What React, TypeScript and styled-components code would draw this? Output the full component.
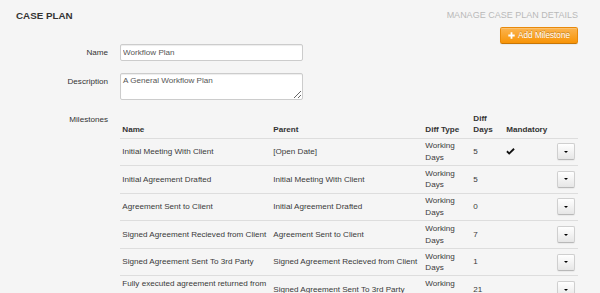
import React from "react";
import styled, { createGlobalStyle } from "styled-components";

const Global = createGlobalStyle`
  html, body { margin: 0; padding: 0; overflow: hidden; background: #f5f5f5; }
  body { font-family: "Liberation Sans", Arial, Helvetica, sans-serif; color: #333; }
`;

const Page = styled.div`
  padding: 10px 22px 0 16px;
  font-size: 8.1px;
  line-height: 11.6px;
`;

const Header = styled.div`
  display: flex;
  justify-content: space-between;
  align-items: flex-start;
  height: 12px;
`;

const Title = styled.h1`
  margin: 0;
  font-size: 9.8px;
  line-height: 12px;
  font-weight: bold;
  color: #333;
`;

const Subtitle = styled.div`
  margin-top: -1px;
  font-size: 9px;
  line-height: 12px;
  color: #b9b9b9;
`;

const ActionBar = styled.div`
  display: flex;
  justify-content: flex-end;
  margin-top: 5px;
`;

const WarningButton = styled.button`
  display: flex;
  align-items: center;
  gap: 3px;
  height: 17px;
  padding: 0 7px;
  font-family: inherit;
  font-size: 8.2px;
  line-height: 11px;
  color: #fff;
  text-shadow: 0 -1px 0 rgba(0, 0, 0, 0.25);
  background: linear-gradient(to bottom, #fbb450, #f89406);
  border: 1px solid #e8890a;
  border-bottom-color: #c77606;
  border-radius: 2.3px;
  box-shadow: inset 0 1px 0 rgba(255, 255, 255, 0.2), 0 1px 1px rgba(0, 0, 0, 0.05);
  cursor: pointer;
`;

const Form = styled.div`
  display: grid;
  grid-template-columns: 92px 1fr;
  column-gap: 12px;
  row-gap: 11.5px;
`;

const Label = styled.label`
  text-align: right;
  padding-top: 3.2px;
  color: #333;
`;

const TextInput = styled.input`
  box-sizing: border-box;
  width: 183px;
  height: 17px;
  padding: 0 2px;
  font-family: inherit;
  font-size: 8.1px;
  color: #555;
  background: #fff;
  border: 1px solid #ccc;
  border-radius: 2px;
  box-shadow: inset 0 1px 1px rgba(0, 0, 0, 0.075);
  outline: none;
`;

const TextArea = styled.textarea`
  box-sizing: border-box;
  display: block;
  width: 183px;
  height: 27px;
  padding: 1.5px 2px;
  font-family: inherit;
  font-size: 8.1px;
  line-height: 11.6px;
  color: #555;
  background: #fff;
  border: 1px solid #ccc;
  border-radius: 2px;
  box-shadow: inset 0 1px 1px rgba(0, 0, 0, 0.075);
  outline: none;
`;

const Table = styled.table`
  width: 458px;
  table-layout: fixed;
  border-collapse: collapse;
  border-spacing: 0;
`;

const Th = styled.th`
  text-align: left;
  vertical-align: bottom;
  padding: 1.7px 2.3px;
  font-weight: bold;
  color: #333;
`;

const Td = styled.td<{ $center?: boolean }>`
  vertical-align: middle;
  padding: 1.7px 2.3px;
  border-top: 1px solid #dddddd;
  color: #3a3a3a;
  text-align: ${(p) => (p.$center ? "center" : "left")};
`;

const CaretButton = styled.button`
  display: inline-flex;
  align-items: center;
  justify-content: center;
  box-sizing: border-box;
  width: 18px;
  height: 17px;
  padding: 0;
  vertical-align: middle;
  background: linear-gradient(to bottom, #ffffff, #e6e6e6);
  border: 1px solid #cfcfcf;
  border-bottom-color: #b8b8b8;
  border-radius: 2px;
  box-shadow: inset 0 1px 0 rgba(255, 255, 255, 0.2), 0 1px 1px rgba(0, 0, 0, 0.05);
  cursor: pointer;
`;

const Caret = styled.span`
  width: 0;
  height: 0;
  border-left: 2px solid transparent;
  border-right: 2px solid transparent;
  border-top: 2.4px solid #000;
`;

const Plus = () => (
  <svg width="7" height="7" viewBox="0 0 7 7" aria-hidden>
    <path d="M3.5 0.3V6.7M0.3 3.5H6.7" stroke="#fff" strokeWidth="1.8" />
  </svg>
);

const Check = () => (
  <svg width="9" height="7" viewBox="0 0 9 7" aria-hidden style={{ display: "block" }}>
    <path d="M0.3 3.9 L1.6 2.6 L3.2 4.2 L7.4 0.1 L8.7 1.4 L3.2 6.8 Z" fill="#111" />
  </svg>
);

const rows = [
  { name: "Initial Meeting With Client", parent: "[Open Date]", days: "5", mandatory: true },
  { name: "Initial Agreement Drafted", parent: "Initial Meeting With Client", days: "5", mandatory: false },
  { name: "Agreement Sent to Client", parent: "Initial Agreement Drafted", days: "0", mandatory: false },
  { name: "Signed Agreement Recieved from Client", parent: "Agreement Sent to Client", days: "7", mandatory: false },
  { name: "Signed Agreement Sent To 3rd Party", parent: "Signed Agreement Recieved from Client", days: "1", mandatory: false },
  { name: "Fully executed agreement returned from Client", parent: "Signed Agreement Sent To 3rd Party", days: "21", mandatory: false },
];

export default function App() {
  return (
    <>
      <Global />
      <Page>
        <Header>
          <Title>CASE PLAN</Title>
          <Subtitle>MANAGE CASE PLAN DETAILS</Subtitle>
        </Header>
        <ActionBar>
          <WarningButton>
            <Plus />
            Add Milestone
          </WarningButton>
        </ActionBar>
        <Form>
          <Label>Name</Label>
          <div>
            <TextInput defaultValue="Workflow Plan" />
          </div>
          <Label>Description</Label>
          <div>
            <TextArea defaultValue="A General Workflow Plan" />
          </div>
          <Label>Milestones</Label>
          <Table>
            <colgroup>
              <col style={{ width: 151 }} />
              <col style={{ width: 152 }} />
              <col style={{ width: 48 }} />
              <col style={{ width: 33 }} />
              <col style={{ width: 49 }} />
              <col style={{ width: 25 }} />
            </colgroup>
            <thead>
              <tr>
                <Th>Name</Th>
                <Th>Parent</Th>
                <Th>Diff Type</Th>
                <Th>Diff Days</Th>
                <Th>Mandatory</Th>
                <Th />
              </tr>
            </thead>
            <tbody>
              {rows.map((r) => (
                <tr key={r.name}>
                  <Td>{r.name}</Td>
                  <Td>{r.parent}</Td>
                  <Td>Working Days</Td>
                  <Td>{r.days}</Td>
                  <Td>{r.mandatory ? <Check /> : null}</Td>
                  <Td $center>
                    <CaretButton aria-label="Options">
                      <Caret />
                    </CaretButton>
                  </Td>
                </tr>
              ))}
            </tbody>
          </Table>
        </Form>
      </Page>
    </>
  );
}
